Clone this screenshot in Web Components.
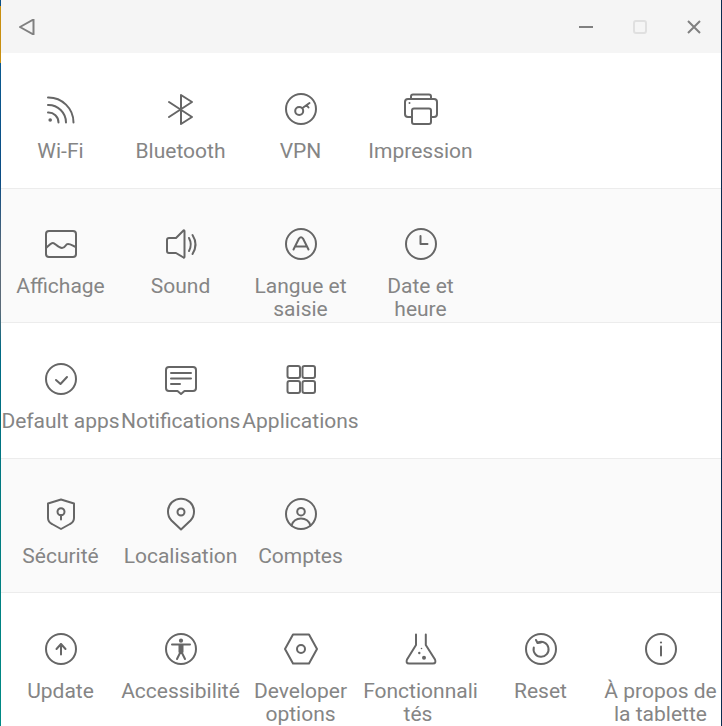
<!DOCTYPE html>
<html lang="fr">
<head>
<meta charset="utf-8">
<title>Paramètres</title>
<style>
  html, body { margin: 0; height: 100%; overflow: hidden; }
  body {
    background:
      linear-gradient(#0a4f86 0 6px, #c88f10 6px 63px, #0a5a90 63px, #0b4c84 180px, #5a6a78 255px, #5a6a78 310px, #006a85 350px, #007a80 500px, #008a85 726px) left / 1px 100% no-repeat,
      #0a2c50;
    font-family: Roboto, "Liberation Sans", sans-serif;
  }
</style>
</head>
<body>
<settings-window>
  <title-bar></title-bar>
  <settings-row>
    <setting-item icon="wifi" label="Wi-Fi"></setting-item>
    <setting-item icon="bluetooth" label="Bluetooth"></setting-item>
    <setting-item icon="vpn" label="VPN"></setting-item>
    <setting-item icon="print" label="Impression"></setting-item>
  </settings-row>
  <settings-row shade>
    <setting-item icon="display" label="Affichage"></setting-item>
    <setting-item icon="sound" label="Sound"></setting-item>
    <setting-item icon="lang" label="Langue et saisie"></setting-item>
    <setting-item icon="clock" label="Date et heure"></setting-item>
  </settings-row>
  <settings-row>
    <setting-item icon="check" label="Default apps"></setting-item>
    <setting-item icon="notif" label="Notifications"></setting-item>
    <setting-item icon="apps" label="Applications"></setting-item>
  </settings-row>
  <settings-row shade>
    <setting-item icon="shield" label="Sécurité"></setting-item>
    <setting-item icon="pin" label="Localisation"></setting-item>
    <setting-item icon="user" label="Comptes"></setting-item>
  </settings-row>
  <settings-row last>
    <setting-item icon="up" label="Update"></setting-item>
    <setting-item icon="access" label="Accessibilité"></setting-item>
    <setting-item icon="hex" label="Developer options"></setting-item>
    <setting-item icon="flask" label="Fonctionnalités" break-at="12"></setting-item>
    <setting-item icon="reset" label="Reset"></setting-item>
    <setting-item icon="info" label="À propos de la tablette"></setting-item>
  </settings-row>
</settings-window>
<script>
  const ICONS = {
    wifi: '<path d="M3 4.500A25 25 0 0 1 28.500 29.500M3 12A17.500 17.500 0 0 1 21 29.500M3 19.500A10 10 0 0 1 13.500 29.500"/><circle cx="5.200" cy="27" r="1.800" class="f"/>',
    bluetooth: '<path d="M4 9 27 24 16 31V2L27 9 4 24"/>',
    vpn: '<circle cx="16" cy="16" r="15"/><circle cx="14.200" cy="18" r="4"/><path d="M17.500 15 24.500 10M21.500 12 23.500 14.500"/>',
    print: '<path d="M6 6V3.500Q6 1.500 8 1.500H24Q26 1.500 26 3.500V6"/><path d="M6 24H3Q0 24 0 21V9Q0 6 3 6H29Q32 6 32 9V21Q32 24 29 24H26"/><rect x="7" y="15.500" width="19" height="15.500" rx="2"/><circle cx="4.500" cy="10" r="1" class="f"/>',
    display: '<rect x="1" y="3" width="30" height="26" rx="3"/><path d="M1 20C4 17 6 15 8 15S13 20 17 20 20 16 23 16 28 18 31 19"/>',
    sound: '<path d="M2 12Q2 10 4 10H11L18.500 2.500Q19.500 2 19.500 3.500V28.500Q19.500 30 18.500 29.500L11 25H4Q2 25 2 23Z"/><path d="M24 10Q27.500 16.500 24 23M27.500 7Q33.500 16.500 27.500 26"/>',
    lang: '<circle cx="16" cy="16" r="15"/><path d="M8.500 21.500 14 10.500Q16 8 18 10.500L23.500 21.500M11 18.500H21"/>',
    clock: '<circle cx="16" cy="16" r="15"/><path d="M15.500 8V16H22.500"/>',
    check: '<circle cx="16" cy="16" r="15"/><path d="M11 17 15.500 21 22 14"/>',
    notif: '<path d="M4 4H28Q31 4 31 7V25Q31 28 28 28H19.500L16 31 12.500 28H4Q1 28 1 25V7Q1 4 4 4Z"/><path d="M6 10H26M6 15.500H26M6 21H15"/>',
    apps: '<rect x="2.500" y="3" width="12.500" height="12" rx="2"/><rect x="17.500" y="3" width="12.500" height="12" rx="2"/><rect x="2.500" y="18" width="12.500" height="12" rx="2"/><rect x="17.500" y="18" width="12.500" height="12" rx="2"/>',
    shield: '<path d="M16 1.500 29 5.500V20Q29 24 25 26L16 31 7 26Q3 24 3 20V5.500Z"/><circle cx="16" cy="13.700" r="3.500"/><path d="M16 17V21.500"/>',
    pin: '<path d="M16 31.500 6.500 22.500A13 13 0 1 1 25.500 22.500Z"/><circle cx="16" cy="14" r="3.500"/>',
    user: '<circle cx="16" cy="16" r="15"/><circle cx="16" cy="13.700" r="3.800"/><path d="M6.500 27.500C8 23 12 20.500 16 20.500S24 23 25.500 27.500"/>',
    up: '<circle cx="16" cy="16" r="15"/><path d="M16 21.500V11M11.500 16 16 11 20.500 16"/>',
    access: '<circle cx="16" cy="16" r="15"/><circle cx="16" cy="7.700" r="2.100" class="f"/><path d="M7 11.500H25M16 12V19M16 18 12 26M16 18 20 26M14.500 12.500V19M17.500 12.500V19"/>',
    hex: '<path d="M0 16 8 1.500H24L32 16 24 30.500H8Z"/><circle cx="16" cy="16" r="4"/>',
    flask: '<path d="M11 1.500V12L2 26.500Q0.500 30.500 4 30.500H28Q31.500 30.500 30 26.500L20.800 12V1.500"/><circle cx="19" cy="24.700" r="2" class="f"/><circle cx="14.300" cy="20" r="1.200" class="f"/><circle cx="16.500" cy="15.500" r=".8" class="f"/>',
    reset: '<circle cx="16" cy="16" r="15"/><path d="M13 9.500A7.500 7.500 0 1 1 8.800 14.500"/><path d="M11 7 12.500 10 16 9.500"/>',
    info: '<circle cx="16" cy="16" r="15"/><path d="M16 13.500V22.500"/><circle cx="16" cy="9.500" r="1.100" class="f"/>'
  };

  class SettingsWindow extends HTMLElement {
    connectedCallback() {
      this.attachShadow({ mode: 'open' });
      this.shadowRoot.innerHTML = `
        <style>
          :host {
            display: flex;
            flex-direction: column;
            width: 720px;
            height: 726px;
            margin-left: 1px;
            overflow: hidden;
            background: #fff;
          }
        </style>
        <slot></slot>
      `;
    }
  }

  class TitleBar extends HTMLElement {
    connectedCallback() {
      this.attachShadow({ mode: 'open' });
      this.shadowRoot.innerHTML = `
        <style>
          :host {
            display: flex;
            align-items: center;
            justify-content: space-between;
            flex: 0 0 auto;
            height: 53px;
            background: #f5f5f5;
          }
          .group { display: flex; }
          button {
            display: flex;
            align-items: center;
            justify-content: center;
            width: 54px;
            height: 53px;
            padding: 0;
            border: 0;
            background: none;
          }
          button.back { width: 52px; }
          svg { width: 16px; height: 16px; fill: none; stroke: #808080; stroke-width: 2; display: block; }
        </style>
        <div class="group">
          <button class="back" aria-label="Retour"><svg viewBox="0 0 16 16"><path d="M14.500 .500 1 8 14.500 15.500Z" stroke-linejoin="round"/></svg></button>
        </div>
        <div class="group">
          <button aria-label="Réduire"><svg viewBox="0 0 16 16"><path d="M1 8H15"/></svg></button>
          <button aria-label="Agrandir"><svg viewBox="0 0 16 16" style="stroke:#e0e0e0"><rect x="2" y="2" width="12" height="12" rx="2"/></svg></button>
          <button aria-label="Fermer"><svg viewBox="0 0 16 16"><path d="M2 2 14 14M14 2 2 14"/></svg></button>
        </div>
      `;
    }
  }

  class SettingsRow extends HTMLElement {
    connectedCallback() {
      this.attachShadow({ mode: 'open' });
      this.shadowRoot.innerHTML = `
        <style>
          :host {
            display: flex;
            flex: 0 0 auto;
            box-sizing: border-box;
            height: 136px;
            padding-top: 40px;
            background: #fff;
            border-bottom: 1px solid #ececec;
          }
          :host([shade]) { background: #fafafa; height: 134px; padding-top: 39px; }
          :host([last]) { border-bottom: 0; }
        </style>
        <slot></slot>
      `;
    }
  }

  class SettingItem extends HTMLElement {
    connectedCallback() {
      const label = this.getAttribute('label');
      const cut = this.getAttribute('break-at');
      // the tablet cuts this long word mid-way, and its tail sits a little left of centre
      const text = cut ? label.slice(0, +cut) + '<br><i>' + label.slice(+cut) + '</i>' : label;
      this.attachShadow({ mode: 'open' });
      this.shadowRoot.innerHTML = `
        <style>
          :host {
            display: flex;
            flex-direction: column;
            align-items: center;
            flex: 0 0 120px;
            width: 120px;
          }
          svg {
            display: block;
            width: 32px;
            height: 32px;
            overflow: visible;
            fill: none;
            stroke: #666;
            stroke-width: 2;
            stroke-linecap: round;
            stroke-linejoin: round;
          }
          svg .f { fill: #666; stroke: none; }
          span {
            display: block;
            box-sizing: border-box;
            margin-top: 15px;
            padding-right: 1px;
            width: 120px;
            text-align: center;
            font-size: 21px;
            line-height: 23px;
            color: #858585;
          }
          i { font-style: normal; margin-right: 5px; }
        </style>
        <svg viewBox="0 0 32 32">${ICONS[this.getAttribute('icon')]}</svg>
        <span>${text}</span>
      `;
    }
  }

  customElements.define('settings-window', SettingsWindow);
  customElements.define('title-bar', TitleBar);
  customElements.define('settings-row', SettingsRow);
  customElements.define('setting-item', SettingItem);
</script>
</body>
</html>
